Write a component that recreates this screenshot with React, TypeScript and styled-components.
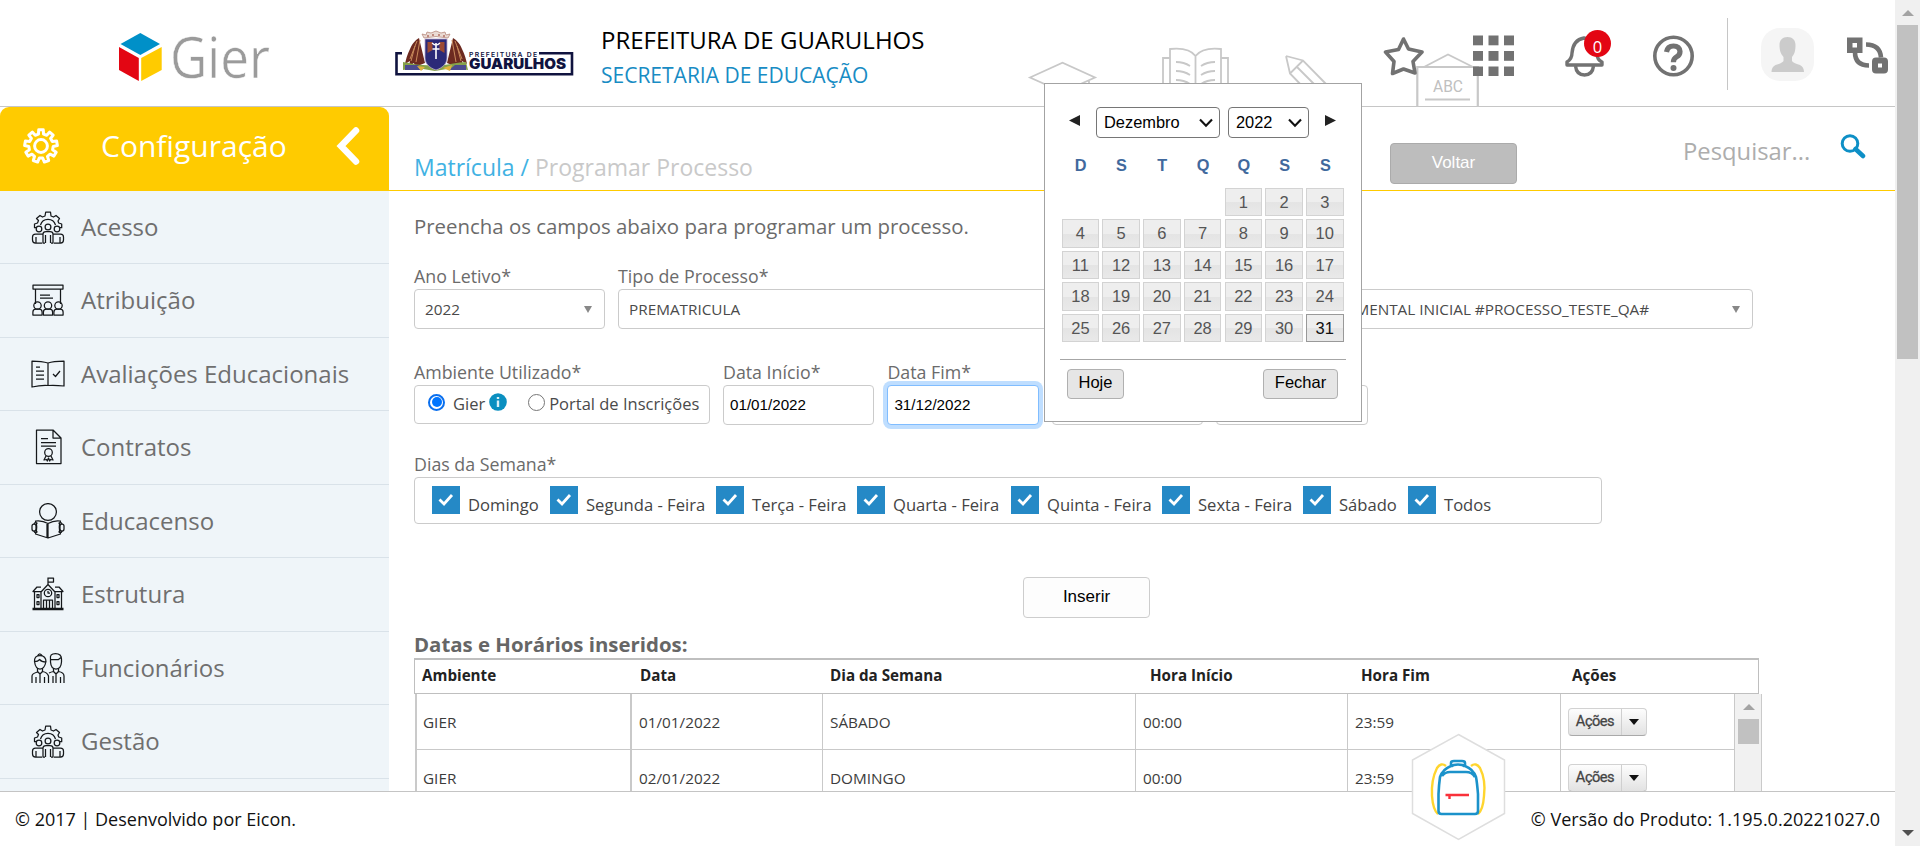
import React from "react";
import styled, { createGlobalStyle, css } from "styled-components";

const GlobalStyle = createGlobalStyle`
  * { box-sizing: border-box; }
  html, body { margin: 0; padding: 0; background: #fff; }
  body {
    font-family: "Open Sans", "Liberation Sans", sans-serif;
    color: #6b6b6b;
    overflow: hidden;
  }
`;

const arial = css`
  font-family: "Liberation Sans", Arial, sans-serif;
`;

/* ---------- page frame ---------- */

const Page = styled.div`
  display: flex;
  width: 1920px;
  height: 846px;
  overflow: hidden;
`;

const Screen = styled.div`
  position: relative;
  display: flex;
  flex-direction: column;
  width: 1895px;
  height: 846px;
`;

const Middle = styled.div`
  display: flex;
  height: 684px;
  overflow: hidden;
`;

const PageScrollbar = styled.div`
  display: flex;
  flex-direction: column;
  align-items: center;
  width: 25px;
  height: 846px;
  padding: 10px 0 10px;
  background: #f0f0f0;
`;

const ScrollThumb = styled.div<{ $height: number; $top: number }>`
  width: 21px;
  height: ${(p) => p.$height}px;
  margin-top: ${(p) => p.$top}px;
  background: #c1c1c1;
`;

const Triangle = styled.div<{ $dir: "up" | "down"; $color: string; $w?: number; $h?: number }>`
  width: 0;
  height: 0;
  border-left: ${(p) => p.$w ?? 6}px solid transparent;
  border-right: ${(p) => p.$w ?? 6}px solid transparent;
  ${(p) =>
    p.$dir === "up"
      ? css`border-bottom: ${p.$h ?? 6}px solid ${p.$color};`
      : css`border-top: ${p.$h ?? 6}px solid ${p.$color};`}
`;

const BottomArrow = styled(Triangle)`
  margin-top: auto;
`;

/* ---------- header ---------- */

const Header = styled.header`
  position: relative;
  display: flex;
  height: 107px;
  border-bottom: 1px solid #c6c6c6;
`;

const Brand = styled.div`
  display: flex;
  width: 395px;
  padding: 32px 0 0 118px;
`;

const CityLogo = styled.div`
  width: 206px;
  padding-top: 30px;
`;

const Titles = styled.div`
  display: flex;
  flex-direction: column;
  width: 782px;
  padding-top: 24px;
  white-space: nowrap;
`;

const CityName = styled.div`
  font-size: 24px;
  line-height: 32px;
  color: #000;
`;

const Department = styled.div`
  font-size: 21px;
  line-height: 34px;
  margin-top: 2px;
  color: #188cc4;
`;

const HeaderIcons = styled.div`
  position: relative;
  z-index: 1;
  display: flex;
  align-items: flex-start;
  flex: 1;
  padding-top: 35px;
`;

const IconSlot = styled.div<{ $left?: number; $top?: number }>`
  position: relative;
  display: flex;
  margin-left: ${(p) => p.$left ?? 0}px;
  margin-top: ${(p) => p.$top ?? 0}px;
`;

const Badge = styled.div`
  position: absolute;
  top: -5px;
  left: 19px;
  width: 27px;
  height: 27px;
  border-radius: 50%;
  background: #e30613;
  color: #fff;
  font-size: 16.5px;
  line-height: 33px;
  text-align: center;
`;

const Divider = styled.div`
  width: 1px;
  height: 72px;
  margin: -17px 0 0 33px;
  background: #c6c6c6;
`;

const HeaderArt = styled.svg`
  position: absolute;
  left: 1020px;
  top: 40px;
`;

/* ---------- sidebar ---------- */

const Sidebar = styled.nav`
  width: 389px;
  height: 684px;
  flex: none;
  background: #eff5f9;
`;

const TitleCorner = styled.div`
  background: #fff;
`;

const SidebarTitle = styled.div`
  display: flex;
  align-items: center;
  height: 84px;
  padding: 0 28px 7px 20px;
  border-radius: 9px 9px 0 0;
  background: #ffcb00;
  color: #fff;
  font-size: 30px;
  line-height: 40px;
`;

const SidebarLabel = styled.span`
  margin-left: 39px;
  flex: 1;
`;

const SidebarItem = styled.div`
  display: flex;
  align-items: center;
  height: 73.5px;
  padding: 0 0 0 31px;
  gap: 16px;
  border-bottom: 1px solid #d9e2e9;
  color: #6f6f6f;
  font-size: 24px;
  line-height: 32px;
  white-space: nowrap;
  &:nth-child(2) {
    height: 73px;
  }
`;

/* ---------- main ---------- */

const Main = styled.main`
  width: 1506px;
`;

const TitleBar = styled.div`
  display: flex;
  align-items: flex-start;
  height: 84px;
  padding: 0 29px 0 25px;
  border-bottom: 1px solid #ffcb00;
`;

const Crumbs = styled.div`
  width: 976px;
  padding-top: 44px;
  font-size: 23px;
  line-height: 32px;
  color: #c9c9c9;
  white-space: nowrap;
  b {
    font-weight: 400;
    color: #41b2e3;
  }
`;

const PlainButton = styled.button<{ $tone: "grey" | "light" }>`
  ${arial}
  width: 127px;
  height: 41px;
  padding: 0 0 2px;
  font-size: 17px;
  border-radius: 4px;
  ${(p) =>
    p.$tone === "grey"
      ? css`
          margin-top: 36px;
          background: #bdbdbd;
          border: 1px solid #ababab;
          color: #fff;
        `
      : css`
          display: block;
          margin: 53px 0 0 609px;
          background: #fdfdfd;
          border: 1px solid #cdcdcd;
          color: #000;
        `}
`;

const Search = styled.div`
  display: flex;
  margin-left: auto;
  padding-top: 27px;
  width: 183px;
  justify-content: space-between;
  font-size: 23.8px;
  line-height: 34px;
  color: #adadad;
`;

const Content = styled.div`
  padding: 20px 0 0 25px;
`;

const Intro = styled.p`
  margin: 0 0 24px;
  font-size: 20.4px;
  line-height: 30px;
`;

const FormRow = styled.div<{ $gap: number; $after: number }>`
  display: flex;
  gap: ${(p) => p.$gap}px;
  margin-bottom: ${(p) => p.$after}px;
`;

const Field = styled.div<{ $width: number }>`
  width: ${(p) => p.$width}px;
  flex: none;
`;

const FieldLabel = styled.div`
  height: 24px;
  font-size: 17.8px;
  line-height: 22px;
  white-space: nowrap;
`;

const Box = styled.div<{ $focus?: boolean; $height?: number }>`
  display: flex;
  align-items: center;
  height: ${(p) => p.$height ?? 40}px;
  border: 1px solid ${(p) => (p.$focus ? "#80bdff" : "#cbcbcb")};
  border-radius: 4px;
  background: #fff;
  ${(p) => p.$focus && css`box-shadow: 0 0 0 4px #bfdeff;`}
`;

const SelectBox = styled(Box)`
  justify-content: space-between;
  padding: 0 12px 0 10px;
  font-size: 15.3px;
  color: #4a4a4a;
  white-space: nowrap;
`;

const DateBox = styled(Box)`
  ${arial}
  padding-left: 6px;
  padding-bottom: 2px;
  font-size: 15.2px;
  color: #000;
`;

const RadioBox = styled(Box)`
  padding-left: 13px;
  padding-bottom: 3px;
  font-size: 16.5px;
  color: #4a4a4a;
  white-space: nowrap;
`;

const Radio = styled.span<{ $on?: boolean }>`
  display: flex;
  align-items: center;
  justify-content: center;
  width: 17px;
  height: 17px;
  margin-bottom: 2px;
  border: ${(p) => (p.$on ? "2px solid #0a6fee" : "1px solid #767676")};
  border-radius: 50%;
  &::after {
    content: "";
    width: 10px;
    height: 10px;
    border-radius: 50%;
    background: ${(p) => (p.$on ? "#0075ff" : "transparent")};
  }
`;

const RadioText = styled.span<{ $left: number }>`
  margin-left: ${(p) => p.$left}px;
`;

const Info = styled.svg`
  margin: 0 21px 3px 4px;
`;

const DaysBox = styled(Box)`
  width: 1188px;
  padding-left: 17px;
  align-items: flex-start;
  padding-top: 8px;
  font-size: 16.6px;
  color: #444;
  white-space: nowrap;
`;

const Day = styled.div<{ $width: number }>`
  display: flex;
  width: ${(p) => p.$width}px;
  gap: 8px;
  line-height: 38px;
`;

const Check = styled.div`
  display: flex;
  align-items: center;
  justify-content: center;
  width: 28px;
  height: 28px;
  background: #2589c6;
  flex: none;
`;

const TableTitle = styled.h3`
  margin: 14px 0 0;
  padding-bottom: 2px;
  font-size: 20.4px;
  line-height: 24px;
  font-weight: 700;
  color: #666;
`;

/* ---------- table ---------- */

const TableHead = styled.div`
  display: grid;
  grid-template-columns: 218px 190px 320px 211px 211px 1fr;
  align-items: center;
  width: 1345px;
  height: 36px;
  padding: 0 0 3px 7px;
  border: 1px solid #bfbfbf;
  border-top-width: 2px;
  font-size: 15.2px;
  font-weight: 700;
  color: #222;
`;

const TableBody = styled.div`
  display: flex;
  width: 1347px;
  margin-left: 1px;
  border-left: 2px solid #cacaca;
  border-right: 1px solid #cacaca;
`;

const Rows = styled.div`
  width: 1318px;
`;

const Row = styled.div`
  display: grid;
  grid-template-columns: 215px 191px 313px 212px 213px 174px;
  height: 56px;
  border-bottom: 1px solid #c9c9c9;
  font-size: 15.3px;
  color: #3c3c3c;
`;

const Cell = styled.div<{ $wide?: boolean }>`
  display: flex;
  align-items: center;
  padding-left: ${(p) => (p.$wide ? 6 : 7)}px;
  border-right: ${(p) => (p.$wide ? 2 : 1)}px solid #c9c9c9;
`;

const InnerScroll = styled.div`
  display: flex;
  flex-direction: column;
  align-items: center;
  width: 26px;
  padding: 10px 0 0 1px;
  background: #f1f1f1;
`;

const ActionButton = styled.div`
  display: flex;
  width: 79px;
  height: 28px;
  border: 1px solid #d2d2d2;
  border-bottom-color: #a9a9a9;
  border-radius: 4px;
  background: linear-gradient(#fdfdfd, #e2e2e2);
  font-family: Roboto, "Liberation Sans", sans-serif;
  font-size: 14.6px;
  letter-spacing: -0.5px;
  line-height: 25px;
  color: #444;
  -webkit-text-stroke: 0.3px #444;
`;

const ActionText = styled.span`
  width: 53px;
  text-align: center;
  border-right: 1px solid #cfcfcf;
`;

const ActionArrow = styled.span`
  display: flex;
  flex: 1;
  align-items: center;
  justify-content: center;
`;

/* ---------- footer ---------- */

const Footer = styled.footer`
  display: flex;
  justify-content: space-between;
  height: 55px;
  padding: 13px 15px 0 15px;
  border-top: 1px solid #c4c4c4;
  background: #fff;
  font-size: 18px;
  line-height: 28px;
  color: #111;
`;

const Backpack = styled.svg`
  position: absolute;
  left: 1411px;
  top: 733px;
`;

/* ---------- calendar ---------- */

const Calendar = styled.div`
  ${arial}
  position: absolute;
  z-index: 5;
  left: 1044px;
  top: 83px;
  width: 318px;
  height: 339px;
  padding: 23px 16px 0;
  border: 1px solid #a3a3a3;
  background: #fff;
`;

const CalendarTop = styled.div`
  display: flex;
  align-items: flex-start;
  height: 31px;
  padding-left: 8px;
`;

const MonthArrow = styled.svg<{ $left?: number }>`
  margin: 7px 0 0 ${(p) => p.$left ?? 0}px;
`;

const Dropdown = styled.div<{ $width: number; $left: number }>`
  display: flex;
  align-items: center;
  justify-content: space-between;
  width: ${(p) => p.$width}px;
  height: 31px;
  margin-left: ${(p) => p.$left}px;
  padding: 0 6px 0 7px;
  border: 1px solid #767676;
  border-radius: 4px;
  font-size: 16.4px;
  color: #000;
`;

const WeekHead = styled.div`
  display: grid;
  grid-template-columns: repeat(7, 40.8px);
  margin-top: 16px;
  font-size: 16.3px;
  font-weight: 700;
  line-height: 22px;
  color: #41699d;
  text-align: center;
  span {
    padding-right: 1.5px;
  }
`;

const Dates = styled.div`
  display: grid;
  grid-template-columns: repeat(7, 37.6px);
  grid-auto-rows: 28.4px;
  gap: 3.1px 3.15px;
  margin: 12px 0 0 0.6px;
`;

const DateCell = styled.div<{ $selected?: boolean; $start?: boolean }>`
  border: 1px solid ${(p) => (p.$selected ? "#999" : "#d3d3d3")};
  background: linear-gradient(#eee 0 50%, #e4e4e4 52%, #e9e9e9 100%);
  color: ${(p) => (p.$selected ? "#111" : "#555")};
  font-size: 16.5px;
  line-height: 26.5px;
  text-align: center;
  ${(p) => p.$start && css`grid-column-start: 5;`}
`;

const CalendarFoot = styled.div`
  display: flex;
  justify-content: space-between;
  margin: 16.6px -1px 0 -1px;
  padding: 9px 8px 0 7px;
  border-top: 1px solid #a6a6a6;
`;

const CalendarButton = styled.button<{ $width: number }>`
  ${arial}
  width: ${(p) => p.$width}px;
  height: 30px;
  padding: 0 0 3px;
  border: 1px solid #b0b0b0;
  border-radius: 4px;
  background: #e6e6e6;
  font-size: 16.5px;
  color: #000;
`;

/* ---------- drawings ---------- */

const GierLogo = () => (
  <svg width="154" height="60" viewBox="0 0 154 60" overflow="visible">
    <path d="M2.500 12 22.300 1 42 12 22.300 23Z" fill="#0090c8" />
    <path d="M1 15 20.800 26V49L1 38Z" fill="#e30613" />
    <path d="M43.700 15 23.200 26V49L43.700 38Z" fill="#ffcb00" />
    <text x="52" y="45.700" fontSize="57" fontWeight="400" fill="#9b9b9b" textLength="100" lengthAdjust="spacingAndGlyphs" stroke="#fff" strokeWidth="0.500">
      Gier
    </text>
  </svg>
);

const GuarulhosLogo = () => (
  <svg width="180" height="48" viewBox="0 0 180 48" fontFamily="Inter, sans-serif">
    <path d="M7 23.200H1.500V44.200H177V23.200H144" fill="none" stroke="#10133f" strokeWidth="2.600" />
    <path d="M24 8c-3 2-6 4-9 11-3 6-4 10-5 15l5-3-1 5 5-3 1 4 10-4zM58 8c3 2 6 4 9 11 3 6 4 10 5 15l-5-3 1 5-5-3-1 4-10-4z" fill="#6d2a20" />
    <path d="M22 11l-7 18M20 16l-4 15M25 10l-4 22M60 11l7 18M62 16l4 15M57 10l4 22" stroke="#c98a5c" strokeWidth="1" />
    <path d="M8 32c8 1 15 4 30 3 14 1 24-3 33-3l2 8-15-2-18 3-18-3-14 2z" fill="#86a24a" />
    <path d="M10 35h13l5 5H10zM54 40l6-5h11v5z" fill="#4c4b8f" />
    <path d="M22 36l8 1-4 4zM48 38l9-3-2 6z" fill="#e0b23c" />
    <path d="M30 9H52V28c0 6-5 10-11 12-6-2-11-6-11-12z" fill="#2b2a78" stroke="#b7a6c9" strokeWidth=".8" />
    <path d="M32.500 12h5v8l-5 3zM44.500 12h5v11l-5-3z" fill="#9c4a33" />
    <path d="M41 13v16M37.500 19h7" stroke="#fff" strokeWidth="1.600" />
    <path d="M37 13q4 4 8 0" stroke="#fff" fill="none" strokeWidth="1.100" />
    <path d="M29 8l-2-4 4 1 1-3 4 1 5-2 5 2 4-1 1 3 4-1-2 4q-12-3-24 0z" fill="#eadbd4" stroke="#b78a7d" strokeWidth=".8" />
    <path d="M33 5v2M38 4v2M44 4v2M49 5v2" stroke="#a45548" strokeWidth="1.200" />
    <text x="74" y="27" fontSize="6.800" fontWeight="600" fill="#10133f" textLength="68">PREFEITURA DE</text>
    <text x="74" y="39.400" fontSize="14.600" fontWeight="900" fill="#10133f" textLength="97" lengthAdjust="spacingAndGlyphs">GUARULHOS</text>
  </svg>
);

const Art = () => (
  <HeaderArt width="470" height="67" viewBox="1020 40 470 67" fill="none" stroke="#c8c8c8" strokeWidth="1.800">
    <path d="M1030 77.500 1062.500 62.800 1095 77.500 1062.500 92ZM1089 80V100" />
    <path d="M1170 90V49q19-2 25.500 7q7-9 25.500-7V90M1195.500 56V90M1170 58h-7V90M1221 58h7V90" />
    <path d="M1176 62q8 0 14 4M1176 71q8 0 14 4M1176 80q8 0 14 4M1215 62q-8 0-14 4M1215 71q-8 0-14 4M1215 80q-8 0-14 4" />
    <path d="M1286 56 1303 60.500 1328 86M1286 56 1290 73.500 1306 90M1290 73.500 1303 60.500M1297 67 1318 88" />
    <path d="M1417.300 107V67H1477.800V107" strokeWidth="2.200" />
    <path d="M1424 67 1448 54.500 1473 67M1425 99.500H1470" />
    <text x="1433" y="92" fontSize="17" fontFamily="Roboto, sans-serif" fill="#c0c0c0" stroke="none" textLength="30" lengthAdjust="spacingAndGlyphs">ABC</text>
  </HeaderArt>
);

const StarIcon = () => (
  <svg width="42" height="42" viewBox="0 0 42 42" fill="none" stroke="#727272" strokeWidth="3.600" strokeLinejoin="round">
    <path d="M20.500 4 25.500 14 39 17 30 26.500 32 38 20.500 34 9.500 38.500 11 26.500 2.500 17 15.500 14.500Z" />
  </svg>
);

const GridIcon = () => (
  <svg width="41" height="41" viewBox="0 0 41 41" fill="#727272">
    {[0, 15.5, 31].map((y) => [0, 15.5, 31].map((x) => <rect key={`${x}-${y}`} x={x} y={y + 0.5} width="10" height="9.800" />))}
  </svg>
);

const BellIcon = () => (
  <svg width="40" height="42" viewBox="0 0 40 42" fill="none" stroke="#727272" strokeWidth="3.400" strokeLinejoin="round">
    <path d="M2 30V27q5-3 5-9Q8 5 19 3Q31 5 32 18q0 7 5 9v3Z" />
    <path d="M10.500 31q1 9 9 9t9-9" />
  </svg>
);

const HelpIcon = () => (
  <svg width="42" height="42" viewBox="0 0 42 42" fill="none" stroke="#727272">
    <circle cx="21.500" cy="21" r="18.700" strokeWidth="3.600" />
    <path d="M14.500 17q1-6 7-6t6.500 5.500q0 3.500-3.300 5.300t-3.300 5.500" strokeWidth="5.200" />
    <circle cx="21.500" cy="33" r="3" fill="#727272" stroke="none" />
  </svg>
);

const Avatar = () => (
  <svg width="53" height="53" viewBox="0 0 53 53">
    <rect width="53" height="53" rx="19" fill="#f5f5f5" />
    <path d="M26.500 9c5 0 8 3 8 8 0 6-1 9-3.500 12v4q1 2 8 4 4 2 4 7H10.500q0-5 4-7 7-2 8-4v-4c-2.500-3-4-6-4-12 0-5 3-8 8-8z" fill="#cbcbcb" />
  </svg>
);

const TransferIcon = () => (
  <svg width="42" height="38" viewBox="0 0 42 38" fill="none" stroke="#727272">
    <rect x="2.750" y="3.250" width="10" height="10" strokeWidth="5.500" />
    <rect x="28" y="23.500" width="10" height="10" strokeWidth="6" rx="1" />
    <path d="M19 7.500q14 0 15 13M8 15q0 13.500 14 13.500" strokeWidth="4.600" />
  </svg>
);

const gearTeeth = 9;
const gearPath = (() => {
  const points: string[] = [];
  const step = (Math.PI * 2) / gearTeeth;
  const corner: [number, number][] = [[-0.3, 12.2], [-0.2, 16.4], [0.2, 16.4], [0.3, 12.2]];
  for (let i = 0; i < gearTeeth; i += 1) {
    for (const [offset, radius] of corner) {
      const angle = (i + offset) * step - Math.PI / 2;
      points.push(`${(18 + radius * Math.cos(angle)).toFixed(2)} ${(18 + radius * Math.sin(angle)).toFixed(2)}`);
    }
  }
  return `M${points.join("L")}Z`;
})();

const GearIcon = () => (
  <svg width="42" height="36" viewBox="-3 0 42 36" fill="none" stroke="#fff" strokeWidth="3" strokeLinejoin="round">
    <circle cx="18" cy="18" r="6.400" />
    <path d={gearPath} />
  </svg>
);

const BackIcon = () => (
  <svg width="28" height="38" viewBox="0 0 28 38" fill="none" stroke="#fff" strokeWidth="6.500">
    <path d="M23 3.500 8 19 23 34.500" strokeLinecap="round" />
  </svg>
);

const SearchIcon = () => (
  <svg width="26" height="26" viewBox="0 0 26 26" fill="none" stroke="#0e8fc6">
    <circle cx="10" cy="9.500" r="7.800" strokeWidth="3" />
    <path d="M15.500 15 23 22" strokeWidth="4.500" strokeLinecap="round" />
  </svg>
);

const ItemSvg = styled.svg`
  width: 34px;
  height: 36px;
  fill: none;
  stroke: #15181b;
  stroke-width: 1.25;
  stroke-linejoin: round;
`;

const TeamGear = () => (
  <ItemSvg viewBox="0 0 34 36">
    <path d="M5 18.700H3.500V15L6.500 14 7.500 11.500 5.500 9.500 9 6.500 11.500 8 14 7 14.700 3H19.500L20 7 22.500 8 25 6.500 28.500 9.500 27 12 27.700 14 30.700 15V18.700H29" />
    <path d="M9.500 16a7.800 7.800 0 0 1 15 0" />
    <circle cx="17" cy="18" r="2.900" />
    <circle cx="8" cy="20" r="2.800" />
    <circle cx="26" cy="20" r="2.800" />
    <path d="M14 34h-2V25q0-2.500 3-2.500h4q3 0 3 2.500v9h-2M14.500 26v8M19.500 26v8M11 34H4.500q-3 0-3-3V28q0-3 3-3H12M23 34h6.500q3 0 3-3V28q0-3-3-3H22M5 28v6M29 28v6" />
  </ItemSvg>
);

const ClassIcon = () => (
  <ItemSvg viewBox="0 0 34 36">
    <path d="M2 3H32V7H2ZM4.500 7V22M29.500 7V22M9 13H19M9 16H22" />
    {[6.5, 17, 27.5].map((x) => (
      <g key={x}>
        <circle cx={x} cy="23.500" r="3.700" />
        <path d={`M${x - 4.6} 33V30q0-3 3-3h3.200q3 0 3 3v3Z`} />
      </g>
    ))}
  </ItemSvg>
);

const BookIcon = () => (
  <ItemSvg viewBox="0 0 34 36">
    <path d="M17 7Q11 5 1 5V31Q10 29 17 29.500 24 29 33 30V5Q22 5 17 7V29.500" />
    <path d="M5 11h4M5 15h8M5 19h8M5 23h8M22 18l2.500 2.500L29 15" />
  </ItemSvg>
);

const ContractIcon = () => (
  <ItemSvg viewBox="0 0 34 36">
    <path d="M5.500 1H22L30 9V34.500H5.500ZM22 1V9H30M10 9.500H17M10 13.500H25M10 17H25" />
    <circle cx="17.500" cy="23.500" r="3.800" />
    <path d="M15 27l-2 4 2.500-.5.8 1.500 1.200-3 1.200 3 .8-1.500 2.500.5-2-4" />
  </ItemSvg>
);

const ReaderIcon = () => (
  <ItemSvg viewBox="0 0 34 36">
    <circle cx="17" cy="9" r="8.400" />
    <path d="M17 20.500Q11 17 4.500 18 7 24 4.500 31L17 35 29.500 31Q27 24 29.500 18 23 17 17 20.500V35M16 21V34M6.500 20.500Q4 18.500 3 21M6.500 28.500Q4 31 3 28M27.500 20.500Q30 18.500 31 21M27.500 28.500Q30 31 31 28" />
    <rect x="1" y="21" width="4" height="7" rx="2" />
    <rect x="29" y="21" width="4" height="7" rx="2" />
  </ItemSvg>
);

const SchoolIcon = () => (
  <ItemSvg viewBox="0 0 34 36">
    <path d="M17 9V1.500M17 2h5.500v4H17M10 16 17 8.500 24 16M10 11H6L2 15.500H10M24 11h4l4 4.500H24M3.500 15.500V32M30.500 15.500V32M10 15V32M24 15V32M12.500 32V24h9v8M15.500 24v8M18.500 24v8" />
    <circle cx="17" cy="17" r="3.700" />
    <path d="M17 15v2h2M6 18.500h2v3H6ZM26 18.500h2v3h-2ZM6 25.500h2v3H6ZM26 25.500h2v3h-2Z" />
    <path d="M1.500 33H32.500" strokeWidth="2.500" />
  </ItemSvg>
);

const StaffIcon = () => (
  <ItemSvg viewBox="0 0 34 36">
    <path d="M6.500 6q2-4.500 5 0M3.500 12Q3 5.500 9 5.500t6 6.500M3.500 11.500q3.500 0 5-2 2 2.500 6.500 2.500M3.500 11.500q1 7.500 5.500 7.500T15 11.500M6.500 18.500v3L9 24l2.500-2.500v-3M1 33V26q0-2.500 5.500-4M11.500 21.500q5 1 6 4.500v7M9 24V33M5 27v6M13.500 27v6" />
    <path d="M19.500 9q-1-5.500 5-5.500t6 5.500v3q-.5 7-5.500 7T19.500 12ZM19.500 9.500h8l2.500-2M22.500 18.500v3l2.500 2.500 2.500-2.500v-3M18 23q2-1 4.500-1.500M27.500 21.500q5.500 1 5.500 4.500v7M25 24v9M22 26v7M29.500 27v6" />
  </ItemSvg>
);

const Chevron = () => (
  <svg width="14" height="10" viewBox="0 0 14 10" fill="none" stroke="#111" strokeWidth="2.100">
    <path d="M1 1.500 7 7.800 13 1.500" />
  </svg>
);

const BackpackBadge = () => (
  <Backpack width="95" height="108" viewBox="0 0 95 108" fill="none">
    <path d="M47.500 1.500 93.500 27V80.500L47.500 106.500 1.500 80.500V27Z" fill="#fff" stroke="#dedede" strokeWidth="1.500" />
    <path d="M35 33q-5-4-9 2-6 12-5 28 1 14 6 18M60 33q5-4 9 2 6 12 4 28-1 14-6 18" stroke="#ffd52e" strokeWidth="2.400" />
    <path d="M40 34V30q0-2 3-2h8q3 0 3 2v4M40 33.500q2-2 7-2t7 2M40 33q-8 3-11 11-1 7-1.500 17V78q0 3 3 3H64q3 0 3-3V61Q66 49 65 44 62 36 54 33M31 43q3-4 8-4H55q6 0 9 5" stroke="#1b92ca" strokeWidth="2.600" />
    <path d="M34.500 62H58M38.500 62v4" stroke="#f9313a" strokeWidth="2.400" />
  </Backpack>
);

const InfoIcon = () => (
  <Info width="18" height="18" viewBox="0 0 18 18">
    <circle cx="9" cy="9" r="8.800" fill="#0a8fc0" />
    <path d="M9 4V6M9 7.500V14" stroke="#d8f0f8" strokeWidth="2.400" />
  </Info>
);

/* ---------- data ---------- */

const menu: [string, React.FC][] = [
  ["Acesso", TeamGear],
  ["Atribuição", ClassIcon],
  ["Avaliações Educacionais", BookIcon],
  ["Contratos", ContractIcon],
  ["Educacenso", ReaderIcon],
  ["Estrutura", SchoolIcon],
  ["Funcionários", StaffIcon],
  ["Gestão", TeamGear],
];

const days: [string, number][] = [
  ["Domingo", 118],
  ["Segunda - Feira", 166],
  ["Terça - Feira", 141],
  ["Quarta - Feira", 154],
  ["Quinta - Feira", 151],
  ["Sexta - Feira", 141],
  ["Sábado", 105],
  ["Todos", 90],
];

const entries = [
  ["GIER", "01/01/2022", "SÁBADO", "00:00", "23:59"],
  ["GIER", "02/01/2022", "DOMINGO", "00:00", "23:59"],
];

const SelectField = ({ label, value, width }: { label: string; value: string; width: number }) => (
  <Field $width={width}>
    <FieldLabel>{label}</FieldLabel>
    <SelectBox>
      <span>{value}</span>
      <Triangle $dir="down" $color="#888" $w={4.5} $h={7} />
    </SelectBox>
  </Field>
);

const DateField = ({ label, value, focus }: { label?: string; value?: string; focus?: boolean }) => (
  <Field $width={151.4}>
    <FieldLabel>{label}</FieldLabel>
    <DateBox $focus={focus}>{value}</DateBox>
  </Field>
);

const DatePicker = () => (
  <Calendar>
    <CalendarTop>
      <MonthArrow width="12" height="13" viewBox="0 0 12 13"><path d="M11 1V12L0 6.500Z" fill="#222" /></MonthArrow>
      <Dropdown $width={124} $left={15}>Dezembro<Chevron /></Dropdown>
      <Dropdown $width={81} $left={8}>2022<Chevron /></Dropdown>
      <MonthArrow $left={16} width="12" height="13" viewBox="0 0 12 13"><path d="M0 1V12L11 6.500Z" fill="#222" /></MonthArrow>
    </CalendarTop>
    <WeekHead>
      {["D", "S", "T", "Q", "Q", "S", "S"].map((d, i) => <span key={i}>{d}</span>)}
    </WeekHead>
    <Dates>
      {Array.from({ length: 31 }, (_, i) => (
        <DateCell key={i} $start={i === 0} $selected={i === 30}>{i + 1}</DateCell>
      ))}
    </Dates>
    <CalendarFoot>
      <CalendarButton $width={57}>Hoje</CalendarButton>
      <CalendarButton $width={75}>Fechar</CalendarButton>
    </CalendarFoot>
  </Calendar>
);

export default function App() {
  return (
    <Page>
      <GlobalStyle />
      <Screen>
        <Header>
          <Brand><GierLogo /></Brand>
          <CityLogo><GuarulhosLogo /></CityLogo>
          <Titles>
            <CityName>PREFEITURA DE GUARULHOS</CityName>
            <Department>SECRETARIA DE EDUCAÇÃO</Department>
          </Titles>
          <Art />
          <HeaderIcons>
            <IconSlot><StarIcon /></IconSlot>
            <IconSlot $left={48}><GridIcon /></IconSlot>
            <IconSlot $left={51}><BellIcon /><Badge>0</Badge></IconSlot>
            <IconSlot $left={47}><HelpIcon /></IconSlot>
            <Divider />
            <IconSlot $left={33} $top={-7}><Avatar /></IconSlot>
            <IconSlot $left={33} $top={2}><TransferIcon /></IconSlot>
          </HeaderIcons>
        </Header>
        <Middle>
          <Sidebar>
            <TitleCorner>
              <SidebarTitle>
                <GearIcon />
                <SidebarLabel>Configuração</SidebarLabel>
                <BackIcon />
              </SidebarTitle>
            </TitleCorner>
            {menu.map(([label, Icon]) => (
              <SidebarItem key={label}><Icon />{label}</SidebarItem>
            ))}
          </Sidebar>
          <Main>
            <TitleBar>
              <Crumbs><b>Matrícula /</b> Programar Processo</Crumbs>
              <PlainButton $tone="grey">Voltar</PlainButton>
              <Search>Pesquisar...<SearchIcon /></Search>
            </TitleBar>
            <Content>
              <Intro>Preencha os campos abaixo para programar um processo.</Intro>
              <FormRow $gap={13} $after={32}>
                <SelectField label="Ano Letivo*" value="2022" width={191} />
                <SelectField label="Tipo de Processo*" value="PREMATRICULA" width={602} />
                <SelectField label="Processo*" value="ENSINO FUNDAMENTAL INICIAL #PROCESSO_TESTE_QA#" width={520} />
              </FormRow>
              <FormRow $gap={13} $after={28}>
                <Field $width={296}>
                  <FieldLabel>Ambiente Utilizado*</FieldLabel>
                  <RadioBox $height={39}>
                    <Radio $on />
                    <RadioText $left={8}>Gier</RadioText>
                    <InfoIcon />
                    <Radio />
                    <RadioText $left={4}>Portal de Inscrições</RadioText>
                  </RadioBox>
                </Field>
                <DateField label="Data Início*" value="01/01/2022" />
                <DateField label="Data Fim*" value="31/12/2022" focus />
                <DateField />
                <DateField />
              </FormRow>
              <FieldLabel>Dias da Semana*</FieldLabel>
              <DaysBox $height={47}>
                {days.map(([label, width]) => (
                  <Day key={label} $width={width}>
                    <Check>
                      <svg width="16" height="14" viewBox="0 0 16 14" fill="none" stroke="#fff" strokeWidth="2.800">
                        <path d="M1.500 6.500 6 11 14 2" />
                      </svg>
                    </Check>
                    <span>{label}</span>
                  </Day>
                ))}
              </DaysBox>
              <PlainButton $tone="light">Inserir</PlainButton>
              <TableTitle>Datas e Horários inseridos:</TableTitle>
              <TableHead>
                {["Ambiente", "Data", "Dia da Semana", "Hora Início", "Hora Fim", "Ações"].map((h) => <span key={h}>{h}</span>)}
              </TableHead>
              <TableBody>
                <Rows>
                  {entries.map((row) => (
                    <Row key={row[1]}>
                      {row.map((value, i) => <Cell key={i} $wide={i === 0}>{value}</Cell>)}
                      <Cell>
                        <ActionButton>
                          <ActionText>Ações</ActionText>
                          <ActionArrow><Triangle $dir="down" $color="#111" $w={5} $h={6} /></ActionArrow>
                        </ActionButton>
                      </Cell>
                    </Row>
                  ))}
                </Rows>
                <InnerScroll>
                  <Triangle $dir="up" $color="#a3a3a3" />
                  <ScrollThumb $height={25} $top={9} />
                </InnerScroll>
              </TableBody>
            </Content>
          </Main>
        </Middle>
        <Footer>
          <span>© 2017 | Desenvolvido por Eicon.</span>
          <span>© Versão do Produto: 1.195.0.20221027.0</span>
        </Footer>
        <BackpackBadge />
        <DatePicker />
      </Screen>
      <PageScrollbar>
        <Triangle $dir="up" $color="#a3a3a3" />
        <ScrollThumb $height={334} $top={9} />
        <BottomArrow $dir="down" $color="#505050" />
      </PageScrollbar>
    </Page>
  );
}
